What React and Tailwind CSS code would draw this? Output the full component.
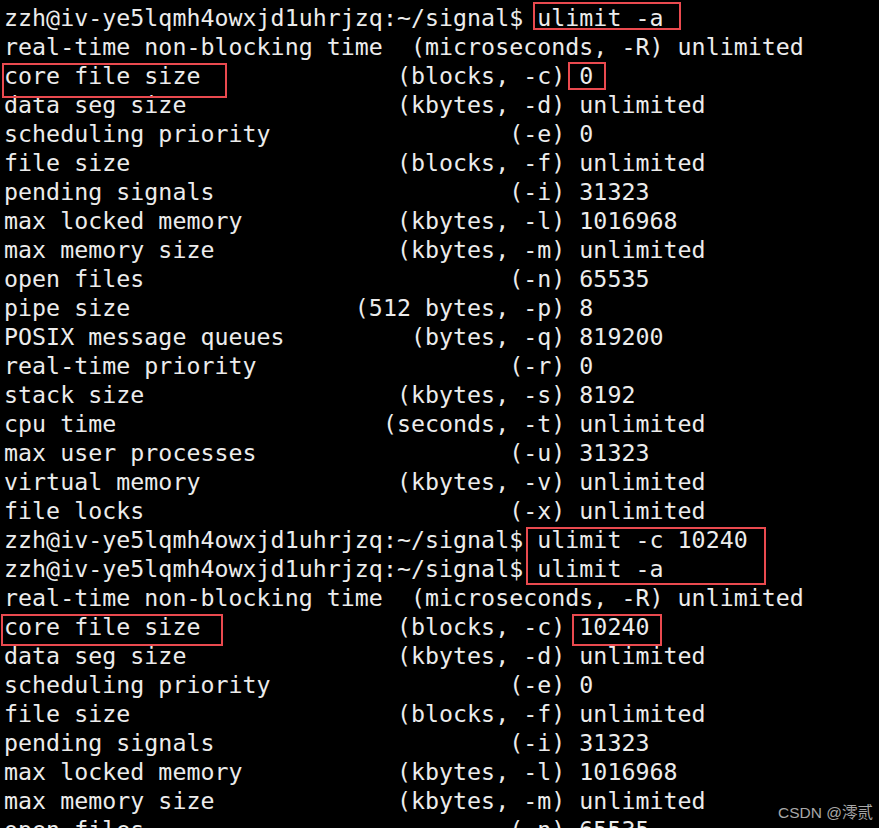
import React from "react";

const PROMPT = "zzh@iv-ye5lqmh4owxjd1uhrjzq:~/signal$ ";

// one line of `ulimit -a` output, paren part right-aligned to column 40
const row = (label, flag, value) => {
  const pad = Math.max(40 - label.length - flag.length, 2);
  return label + " ".repeat(pad) + flag + " " + value;
};

const limits = [
  ["real-time non-blocking time", "(microseconds, -R)", "unlimited"],
  ["core file size", "(blocks, -c)", "0"],
  ["data seg size", "(kbytes, -d)", "unlimited"],
  ["scheduling priority", "(-e)", "0"],
  ["file size", "(blocks, -f)", "unlimited"],
  ["pending signals", "(-i)", "31323"],
  ["max locked memory", "(kbytes, -l)", "1016968"],
  ["max memory size", "(kbytes, -m)", "unlimited"],
  ["open files", "(-n)", "65535"],
  ["pipe size", "(512 bytes, -p)", "8"],
  ["POSIX message queues", "(bytes, -q)", "819200"],
  ["real-time priority", "(-r)", "0"],
  ["stack size", "(kbytes, -s)", "8192"],
  ["cpu time", "(seconds, -t)", "unlimited"],
  ["max user processes", "(-u)", "31323"],
  ["virtual memory", "(kbytes, -v)", "unlimited"],
  ["file locks", "(-x)", "unlimited"],
];

const secondRun = limits.map((l, i) => (i === 1 ? [l[0], l[1], "10240"] : l));

const lines = [
  PROMPT + "ulimit -a",
  ...limits.map((l) => row(...l)),
  PROMPT + "ulimit -c 10240",
  PROMPT + "ulimit -a",
  ...secondRun.map((l) => row(...l)),
];

// red highlight boxes drawn over the screenshot
const boxes = [
  "left-[533px] top-[2px] w-[148px] h-[28px]",
  "left-[2px] top-[63px] w-[225px] h-[35px]",
  "left-[568px] top-[62px] w-[38px] h-[28px]",
  "left-[526px] top-[527px] w-[240px] h-[58px]",
  "left-[1px] top-[614px] w-[222px] h-[32px]",
  "left-[572px] top-[614px] w-[90px] h-[32px]",
];

export default function App() {
  return (
    <div className="relative h-[828px] w-[879px] overflow-hidden bg-black">
      <div className="pl-[4px] pt-[3px] font-['DejaVu_Sans_Mono',monospace] text-[23.25px] tracking-[0.035px] leading-[29px] text-[#ececec] whitespace-pre">
        {lines.map((line, i) => (
          <div key={i}>{line}</div>
        ))}
      </div>

      {boxes.map((b, i) => (
        <div key={i} className={`absolute border-2 border-[#ea4a4f] ${b}`} />
      ))}

      <div className="absolute right-[6px] bottom-[5px] font-['Liberation_Sans','Noto_Sans_CJK_SC',sans-serif] text-[15.5px] leading-[20px] text-[#a8a8a8]">
        CSDN @澪贰
      </div>
    </div>
  );
}
